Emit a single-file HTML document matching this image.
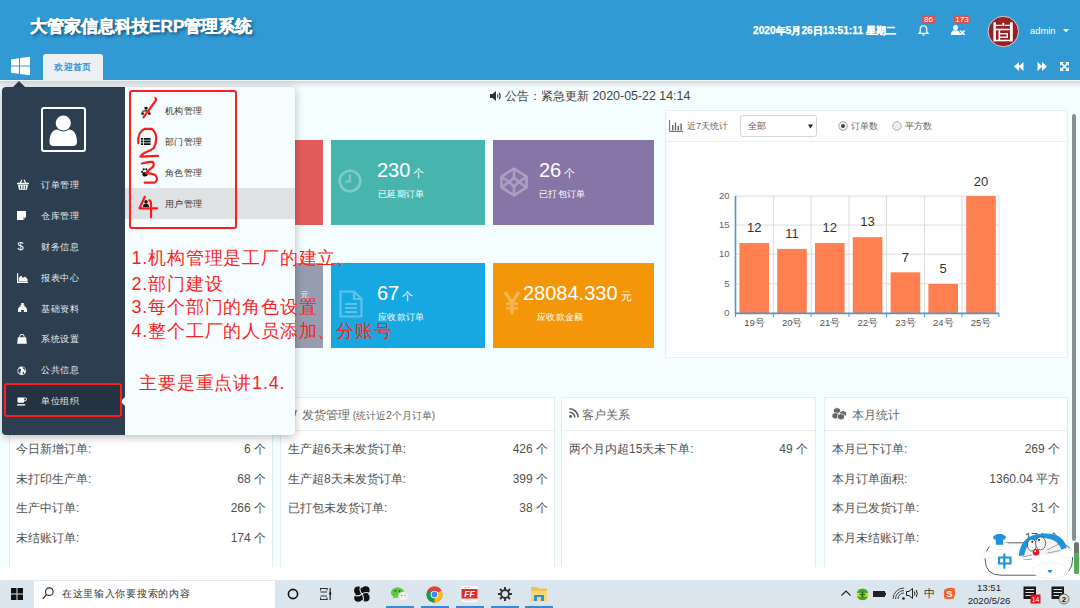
<!DOCTYPE html>
<html><head><meta charset="utf-8">
<style>
*{margin:0;padding:0;box-sizing:border-box}
html,body{width:1080px;height:608px;overflow:hidden;background:#f5fefe;font-family:"Liberation Sans",sans-serif;position:relative}
.a{position:absolute}
.nw{white-space:nowrap}
/* header */
#hdr{left:0;top:0;width:1080px;height:80px;background:#3199d4}
#title{left:30px;top:13.6px;font-size:17.2px;font-weight:bold;color:#fff;text-shadow:2px 2px 3px rgba(0,0,0,.5);-webkit-text-stroke:0.4px #fff;line-height:24px}
#tab{left:43px;top:54px;width:60px;height:26px;background:#eef1f3;border-radius:3px 3px 0 0;color:#3b93d4;font-size:9px;letter-spacing:0.45px;font-weight:bold;text-align:center;line-height:27px}
#band{left:0;top:80px;width:1080px;height:8px;background:linear-gradient(#f4f6f7 0,#f4f6f7 1px,#d3d8da 1.5px,#e4e9eb 4px,#f5fefe 8px)}
.dt{left:753px;top:24px;font-size:10.1px;font-weight:bold;color:#fff;line-height:14px;-webkit-text-stroke:0.25px #fff;letter-spacing:0.05px}
.badge{background:#d9534f;color:#fff;font-size:8px;line-height:9px;height:9px;border-radius:3px;text-align:center}
/* cards */
.card{height:85px;color:#fff}
.num{font-size:20px;line-height:22px;color:#fff}
.num small{font-size:11px;margin-left:3px}
.lbl{font-size:9px;letter-spacing:0.35px;line-height:12px;color:#fff}
/* panels */
.panel{background:#fff;border:1px solid #e6ebeb}
.ph{height:34px;border-bottom:1px solid #e8eef0;font-size:12.5px;color:#555;line-height:34px;padding-left:10px}
.row{font-size:12px;color:#505050;line-height:16px}
/* popup */
#pop{left:2px;top:87px;width:293px;height:348px;border-radius:4px;box-shadow:0 2px 10px rgba(0,0,0,.28);background:#f6fdfe;overflow:hidden}
#popl{left:0;top:0;width:123px;height:348px;background:#2c3e50}
.mi{left:41px;font-size:9px;letter-spacing:0.5px;color:#e9ecef;line-height:12px}
.si{left:164.5px;font-size:9px;letter-spacing:0.5px;color:#333;line-height:12px}
.ann{color:#ff1d1d;font-size:18px;letter-spacing:0.8px;line-height:24px}
/* taskbar */
#tb{left:0;top:580px;width:1080px;height:28px;background:#dbe5ee}
</style></head><body>

<!-- HEADER -->
<div id="hdr" class="a"></div>
<div id="title" class="a nw">大管家信息科技ERP管理系统</div>
<svg class="a" style="left:11px;top:56px" width="20" height="20" viewBox="0 0 20 20"><path d="M0 3.4L8 2.3V9.4H0Z M9 2.1L19 0.7V9.4H9Z M0 10.6H8V17.8L0 16.8Z M9 10.6H19V19.2L9 18Z" fill="#fff"/></svg>
<div id="tab" class="a nw">欢迎首页</div>
<div class="a dt nw">2020年5月26日13:51:11 星期二</div>

<div id="band" class="a"></div>

<!-- header right -->
<svg class="a" style="left:917.5px;top:24.5px" width="11" height="11" viewBox="0 0 12 12"><path d="M6 0.8c-2.2 0-3.6 1.7-3.6 3.8v3L1 9.2h10L9.6 7.6v-3C9.6 2.5 8.2 .8 6 .8z" fill="none" stroke="#fff" stroke-width="1.3"/><path d="M4.6 10.2a1.4 1.4 0 0 0 2.8 0z" fill="#fff"/></svg>
<div class="a badge" style="left:922px;top:15px;width:13px">86</div>
<svg class="a" style="left:951px;top:25px" width="14" height="10" viewBox="0 0 14 10"><circle cx="4.5" cy="2.6" r="2.5" fill="#fff"/><path d="M0 10 C0 6 2 5.2 4.5 5.2 C7 5.2 9 6 9 10Z" fill="#fff"/><path d="M9 5.5 L13.5 10 M13.5 5.5 L9 10" stroke="#fff" stroke-width="1.6"/></svg>
<div class="a badge" style="left:954px;top:15px;width:16px">173</div>
<svg class="a" style="left:987px;top:15px" width="33" height="33" viewBox="0 0 33 33"><circle cx="16.3" cy="16.5" r="15.2" fill="#9a1f22" stroke="#e8dede" stroke-width="0.9"/>
<g fill="#fff"><rect x="6.4" y="7.3" width="2.6" height="19.2"/><rect x="23" y="7.3" width="2.8" height="19.2"/>
<path d="M9 9.8H14.8V11H9Z M17.8 9.8H23V11H17.8Z M15.3 7.8H17.3V11H15.3Z"/>
<rect x="9" y="13.7" width="14" height="1.6"/><rect x="11.5" y="15.3" width="1.6" height="10"/>
<rect x="13" y="18" width="8" height="1.4"/><rect x="13" y="21.5" width="8" height="1.4"/><rect x="19.6" y="18" width="1.4" height="4.9"/>
<rect x="9" y="24.7" width="14" height="1.6"/></g></svg>
<div class="a nw" style="left:1030px;top:24px;font-size:9.4px;color:#fff;line-height:14px">admin</div>
<svg class="a" style="left:1063px;top:29px" width="6" height="4" viewBox="0 0 6 4"><path d="M0 0H6L3 3.5Z" fill="#fff"/></svg>
<svg class="a" style="left:1014px;top:62px" width="10" height="9" viewBox="0 0 10 9"><path d="M0 4.5 L5 0 V9Z M4.5 4.5 L9.5 0 V9Z" fill="#fff"/></svg>
<svg class="a" style="left:1037px;top:62px" width="10" height="9" viewBox="0 0 10 9"><path d="M10 4.5 L5 0 V9Z M5.5 4.5 L0.5 0 V9Z" fill="#fff"/></svg>
<svg class="a" style="left:1060px;top:62px" width="9" height="9" viewBox="0 0 9 9"><path d="M0 0H4L0 4Z M9 0H5L9 4Z M0 9H4L0 5Z M9 9H5L9 5Z" fill="#fff"/><path d="M1.5 1.5L7.5 7.5 M7.5 1.5L1.5 7.5" stroke="#fff" stroke-width="1.5"/></svg>

<!-- notice -->
<svg class="a" style="left:490px;top:91px" width="12" height="10" viewBox="0 0 12 10"><path d="M0 3H2.5L6 0V10L2.5 7H0Z" fill="#333"/><path d="M7.5 3.2Q8.6 5 7.5 6.8 M9.2 1.8Q11.2 5 9.2 8.2" fill="none" stroke="#333" stroke-width="1.1"/></svg>
<div class="a nw" style="left:505px;top:88px;font-size:12.4px;color:#444;line-height:16px">公告：紧急更新 2020-05-22 14:14</div>

<!-- cards -->
<div class="a card" style="left:168px;top:140px;width:155px;background:#e35c5d"></div>
<div class="a card" style="left:331px;top:140px;width:154px;background:#47b5ae"></div>
<div class="a card" style="left:493px;top:140px;width:161px;background:#8775a7"></div>
<div class="a card" style="left:168px;top:263px;width:155px;background:#959daf"></div>
<div class="a card" style="left:331px;top:263px;width:154px;background:#18a8e1"></div>
<div class="a card" style="left:493px;top:263px;width:161px;background:#f39609"></div>
<svg class="a" style="left:338px;top:169px" width="24" height="24" viewBox="0 0 24 24"><g opacity=".3" fill="none" stroke="#fff"><circle cx="12" cy="12" r="10.3" stroke-width="2.6"/><path d="M12 5.5V12.5H7" stroke-width="2.2"/></g></svg>
<div class="a nw num" style="left:377px;top:159px">230<small>个</small></div>
<div class="a nw lbl" style="left:378px;top:188px">已延期订单</div>
<svg class="a" style="left:499px;top:167px" width="30" height="30" viewBox="0 0 30 30"><g opacity=".3" fill="none" stroke="#fff" stroke-width="2.6" stroke-linejoin="round"><path d="M15 1.6L27.6 9.6V20.4L15 28.4L2.4 20.4V9.6Z"/><path d="M15 10.4L19.8 15L15 19.6L10.2 15Z"/><path d="M15 1.6V10.4 M27.6 9.6L19.8 15 M27.6 20.4L19.8 15 M15 28.4V19.6 M2.4 20.4L10.2 15 M2.4 9.6L10.2 15"/></g></svg>
<div class="a nw num" style="left:539px;top:159px">26<small>个</small></div>
<div class="a nw lbl" style="left:539px;top:188px">已打包订单</div>
<svg class="a" style="left:338.8px;top:290px" width="24" height="28" viewBox="0 0 24 28"><g opacity=".3" fill="none" stroke="#fff" stroke-width="2.2" stroke-linejoin="round"><path d="M1.5 1.5H15L22.5 9V26.5H1.5Z M15 1.5V9H22.5"/><path d="M6 14H18 M6 18H18 M6 22H18"/></g></svg>
<div class="a nw" style="left:299.5px;top:290px;font-size:8.5px;line-height:11px;color:rgba(255,255,255,.9)">元</div>
<div class="a nw num" style="left:377px;top:282px">67<small>个</small></div>
<div class="a nw lbl" style="left:378px;top:311px">应收款订单</div>
<svg class="a" style="left:503px;top:291px" width="18" height="24" viewBox="0 0 18 24"><g opacity=".3" fill="none" stroke="#fff" stroke-width="3.2"><path d="M2 1L9 11.5L16 1 M9 11.5V23"/><path d="M3 12.8H15 M3 17.2H15" stroke-width="2.6"/></g></svg>
<div class="a nw num" style="left:523px;top:282px">28084.330<small>元</small></div>
<div class="a nw lbl" style="left:537px;top:311px">应收款金额</div>



<!-- chart panel -->
<div class="a panel" style="left:665px;top:110px;width:403px;height:248px;border-color:#e9eef0"></div>
<div class="a" style="left:666px;top:141px;width:401px;height:1px;background:#e9eef0"></div>
<svg class="a" style="left:669px;top:120px" width="14" height="12" viewBox="0 0 14 12"><path d="M0.6 0V11.4H14" fill="none" stroke="#666" stroke-width="1"/><path d="M3 5H4.4V10.5H3Z M5.8 2.5H7.2V10.5H5.8Z M8.6 6H10V10.5H8.6Z M11.4 3.5H12.8V10.5H11.4Z" fill="#666"/></svg>
<div class="a nw" style="left:687px;top:120px;font-size:9.2px;color:#666;line-height:13px">近7天统计</div>
<div class="a" style="left:740px;top:115px;width:77px;height:22px;border:1px solid #d5d5d5;border-radius:3px;background:#fff"></div>
<div class="a nw" style="left:748px;top:120px;font-size:9.2px;color:#555;line-height:13px">全部</div>
<svg class="a" style="left:808px;top:124px" width="5" height="5" viewBox="0 0 5 5"><path d="M0 0.5H5L2.5 4.5Z" fill="#222"/></svg>
<svg class="a" style="left:838px;top:121px" width="10" height="10" viewBox="0 0 10 10"><circle cx="5" cy="5" r="4.3" fill="#f2f2f2" stroke="#999" stroke-width="0.9"/><circle cx="5" cy="5" r="2" fill="#444"/></svg>
<div class="a nw" style="left:851px;top:120px;font-size:9.2px;color:#666;line-height:13px">订单数</div>
<svg class="a" style="left:892px;top:121px" width="10" height="10" viewBox="0 0 10 10"><circle cx="5" cy="5" r="4.3" fill="#eee" stroke="#aaa" stroke-width="0.9"/></svg>
<div class="a nw" style="left:905px;top:120px;font-size:9.2px;color:#666;line-height:13px">平方数</div>
<svg class="a" style="left:700px;top:160px" width="320" height="180" viewBox="0 0 320 180">
 <g stroke="#dcdcdc" stroke-width="1" fill="none">
  <path d="M35.5 36.1H299 M35.5 65.1H299 M35.5 94.2H299 M35.5 123.8H299"/>
  <path d="M73.4 36V153 M111 36V153 M149 36V153 M186.5 36V153 M224.5 36V153 M262 36V153 M299 36V153"/>
 </g>
 <g fill="#ff7f50">
  <rect x="39.4" y="83" width="29.6" height="70.4"/>
  <rect x="77.2" y="88.9" width="29.6" height="64.5"/>
  <rect x="115" y="83" width="29.6" height="70.4"/>
  <rect x="152.8" y="77.2" width="29.6" height="76.2"/>
  <rect x="190.6" y="112.3" width="29.6" height="41.1"/>
  <rect x="228.4" y="124" width="29.6" height="29.4"/>
  <rect x="266.2" y="36.1" width="29.6" height="117.3"/>
 </g>
 <path d="M35.5 36V154 M35.5 153.4H299" stroke="#5a93c8" stroke-width="1.6" fill="none"/>
 <path d="M35.5 153.4V157 M73.4 153.4V157 M111 153.4V157 M149 153.4V157 M186.5 153.4V157 M224.5 153.4V157 M262 153.4V157 M299 153.4V157" stroke="#5a93c8" stroke-width="1"/>
 <g font-family="Liberation Sans" font-size="9.5" fill="#666" text-anchor="end">
  <text x="29.6" y="38.8">20</text><text x="29.6" y="67.8">15</text><text x="29.6" y="96.9">10</text><text x="29.6" y="126.5">5</text><text x="29.6" y="156.1">0</text>
 </g>
 <g font-family="Liberation Sans" font-size="9.5" fill="#555" text-anchor="middle">
  <text x="54.5" y="166">19号</text><text x="92.2" y="166">20号</text><text x="130" y="166">21号</text><text x="167.7" y="166">22号</text><text x="205.5" y="166">23号</text><text x="243.3" y="166">24号</text><text x="281" y="166">25号</text>
 </g>
 <g font-family="Liberation Sans" font-size="13" fill="#333" text-anchor="middle">
  <text x="54.2" y="72">12</text><text x="92" y="78">11</text><text x="129.8" y="72">12</text><text x="167.6" y="66">13</text><text x="205.4" y="101.5">7</text><text x="243.2" y="113">5</text><text x="281" y="25.8">20</text>
 </g>
</svg>

<!-- bottom panels -->
<div class="a panel" style="left:9px;top:397px;width:264px;height:172px"></div>
<div class="a panel" style="left:280px;top:397px;width:275px;height:172px"></div>
<div class="a panel" style="left:561px;top:397px;width:255px;height:172px"></div>
<div class="a panel" style="left:824px;top:397px;width:244px;height:172px"></div>
<div class="a" style="left:10px;top:430px;width:262px;height:1px;background:#e8eef0"></div>
<div class="a" style="left:281px;top:430px;width:273px;height:1px;background:#e8eef0"></div>
<div class="a" style="left:562px;top:430px;width:253px;height:1px;background:#e8eef0"></div>
<div class="a" style="left:825px;top:430px;width:242px;height:1px;background:#e8eef0"></div>

<div class="a nw" style="left:301.5px;top:407px;font-size:11.6px;color:#666;line-height:16px">发货管理 <span style="font-size:10.2px">(统计近2个月订单)</span></div>
<svg class="a" style="left:288px;top:409px" width="10" height="10" viewBox="0 0 10 10"><path d="M1 8L4 5L2 3L9 1L7 8L5 6Z" fill="#777"/></svg>
<svg class="a" style="left:569px;top:408px" width="10" height="10" viewBox="0 0 10 10"><circle cx="1.6" cy="8.4" r="1.4" fill="#555"/><path d="M0.5 4.2A5.3 5.3 0 0 1 5.8 9.5 M0.5 0.8A8.7 8.7 0 0 1 9.2 9.5" fill="none" stroke="#555" stroke-width="1.5"/></svg>
<div class="a nw" style="left:582px;top:406.5px;font-size:11.6px;color:#666;line-height:16px">客户关系</div>
<svg class="a" style="left:832px;top:407px" width="16" height="13" viewBox="0 0 16 13"><g fill="#666" stroke="#fff" stroke-width="0.7"><path d="M5 0.5L8.5 2V5.5L5 7L1.5 5.5V2Z"/><path d="M3.5 5.5L7 7V10.5L3.5 12L0 10.5V7Z"/><path d="M11 3.5L14.5 5V8.5L11 10L7.5 8.5V5Z"/><path d="M9 6.5L12.5 8V11.5L9 13L5.5 11.5V8Z"/></g></svg>
<div class="a nw" style="left:851.5px;top:406.5px;font-size:11.6px;color:#666;line-height:16px">本月统计</div>

<div class="a row nw" style="left:16px;top:441px">今日新增订单:</div><div class="a row nw" style="left:202px;top:441px;width:64px;text-align:right">6 个</div>
<div class="a row nw" style="left:16px;top:471px">未打印生产单:</div><div class="a row nw" style="left:202px;top:471px;width:64px;text-align:right">68 个</div>
<div class="a row nw" style="left:16px;top:500px">生产中订单:</div><div class="a row nw" style="left:202px;top:500px;width:64px;text-align:right">266 个</div>
<div class="a row nw" style="left:16px;top:529.5px">未结账订单:</div><div class="a row nw" style="left:202px;top:529.5px;width:64px;text-align:right">174 个</div>

<div class="a row nw" style="left:288px;top:441px">生产超6天未发货订单:</div><div class="a row nw" style="left:482px;top:441px;width:66px;text-align:right">426 个</div>
<div class="a row nw" style="left:288px;top:471px">生产超8天未发货订单:</div><div class="a row nw" style="left:482px;top:471px;width:66px;text-align:right">399 个</div>
<div class="a row nw" style="left:288px;top:500px">已打包未发货订单:</div><div class="a row nw" style="left:482px;top:500px;width:66px;text-align:right">38 个</div>

<div class="a row nw" style="left:569px;top:441px">两个月内超15天未下单:</div><div class="a row nw" style="left:742px;top:441px;width:66px;text-align:right">49 个</div>

<div class="a row nw" style="left:832px;top:441px">本月已下订单:</div><div class="a row nw" style="left:962px;top:441px;width:98px;text-align:right">269 个</div>
<div class="a row nw" style="left:832px;top:471px">本月订单面积:</div><div class="a row nw" style="left:962px;top:471px;width:98px;text-align:right">1360.04 平方</div>
<div class="a row nw" style="left:832px;top:500px">本月已发货订单:</div><div class="a row nw" style="left:962px;top:500px;width:98px;text-align:right">31 个</div>
<div class="a row nw" style="left:832px;top:529.5px">本月未结账订单:</div><div class="a row nw" style="left:962px;top:529.5px;width:98px;text-align:right">174 个</div>


<!-- POPUP -->
<svg class="a" style="left:12px;top:80px" width="14" height="8" viewBox="0 0 14 8"><path d="M0 8L7 1L14 8Z" fill="#2c3e50"/></svg>
<div id="pop" class="a">
 <div id="popl" class="a"></div>
 <div class="a" style="left:123px;top:101px;width:170px;height:31px;background:#dfe2e4"></div>
</div>
<!-- avatar -->
<div class="a" style="left:41px;top:107px;width:45px;height:45px;border:2px solid #fff;border-radius:3px"></div>
<svg class="a" style="left:49px;top:115px" width="29" height="32" viewBox="0 0 29 32"><circle cx="14.3" cy="8" r="7.6" fill="#fff"/><path d="M0.5 27C0.5 19 4 14.6 8.5 14.6Q14.3 18.5 20 14.6C24.5 14.6 28 19 28 27Q28 31 24 31H4.5Q0.5 31 0.5 27Z" fill="#fff"/></svg>
<!-- menu -->
<div class="a" style="left:5px;top:384px;width:117px;height:33px;background:#243342"></div>
<svg class="a" style="left:17px;top:179px" width="12" height="11" viewBox="0 0 12 11"><path d="M3 4.5L5 0.8 M9 4.5L7 0.8" stroke="#fff" stroke-width="1.2" fill="none"/><path d="M0 3.8H12V5.2H0Z M1 5.8H11L10 10.8H2Z" fill="#fff"/><path d="M3.6 6.5V10 M6 6.5V10 M8.4 6.5V10" stroke="#2c3e50" stroke-width="0.9"/></svg>
<svg class="a" style="left:17px;top:211px" width="9" height="9" viewBox="0 0 9 9"><path d="M0 0H9V6L6 9H0Z" fill="#fff"/><path d="M6 9V6H9" fill="#aab" /></svg>
<div class="a nw" style="left:17.5px;top:240px;font-size:11px;color:#fff;line-height:13px">$</div>
<svg class="a" style="left:17px;top:273px" width="11" height="10" viewBox="0 0 11 10"><path d="M0.6 0V9.4H11" stroke="#fff" stroke-width="1.2" fill="none"/><path d="M1.8 8.6V5L4 2.5L6 5L8 3.5L10.5 6V8.6Z" fill="#fff"/></svg>
<svg class="a" style="left:18px;top:303px" width="9" height="9" viewBox="0 0 9 9"><path d="M3.3 0H5.7V1.8H6.5V3.8H8V5.3H9V9H5.8V7H3.2V9H0V5.3H1V3.8H2.5V1.8H3.3Z" fill="#fff"/></svg>
<svg class="a" style="left:17px;top:334px" width="10" height="10" viewBox="0 0 11 11"><path d="M3.2 4V2.5Q3.2 0.3 5.5 0.3Q7.8 0.3 7.8 2.5V4" stroke="#fff" stroke-width="1.1" fill="none"/><path d="M1 3.7H10L10.8 10.8H0.2Z" fill="#fff"/></svg>
<svg class="a" style="left:17px;top:366px" width="9.5" height="9.5" viewBox="0 0 11 11"><circle cx="5.5" cy="5.5" r="5" fill="#fff"/><path d="M2.2 3.2Q4 2.6 4.6 4Q5.2 5.6 3.8 6.2Q3.6 7.6 4.4 9.3Q2.2 8.4 1.4 6.4Q1.2 4.4 2.2 3.2Z M6.4 1.4Q6.2 2.8 7.4 3.2Q8.6 3.4 8.4 4.8Q9.4 5 9.9 5.6Q10 3 8 1.6Q7.2 1.2 6.4 1.4Z M6.8 6.6Q8.4 6.6 8.6 7.8Q8 9.2 6.6 9.8Q6.4 8 6.8 6.6Z" fill="#2c3e50"/></svg>
<svg class="a" style="left:17px;top:396.5px" width="10" height="9" viewBox="0 0 11 10"><path d="M0.5 0.5H8V5Q8 6.5 6.5 6.5H2Q0.5 6.5 0.5 5Z" fill="#fff"/><path d="M8 1.2H9.5Q10.5 1.2 10.5 2.6Q10.5 4 9.5 4H8" stroke="#fff" stroke-width="1.1" fill="none"/><path d="M0 8H9V9.5H0Z" fill="#fff"/></svg>
<div class="a mi nw" style="top:179.1px">订单管理</div>
<div class="a mi nw" style="top:210.0px">仓库管理</div>
<div class="a mi nw" style="top:240.8px">财务信息</div>
<div class="a mi nw" style="top:271.7px">报表中心</div>
<div class="a mi nw" style="top:302.5px">基础资料</div>
<div class="a mi nw" style="top:333.4px">系统设置</div>
<div class="a mi nw" style="top:364.3px">公共信息</div>
<div class="a mi nw" style="top:395.1px">单位组织</div>
<svg class="a" style="left:120px;top:396px" width="6" height="11" viewBox="0 0 6 11"><path d="M6 0V11L0.5 5.5Z" fill="#f5fbfd"/></svg>
<!-- submenu -->
<svg class="a" style="left:141px;top:107px" width="10" height="8" viewBox="0 0 10 8"><path d="M3.5 0H6.5V2.2H5.5V3.6H8.6V5.4H9.6V7.8H7.2V5.4H8V4.4H2V5.4H2.8V7.8H0.4V5.4H1.4V3.6H4.5V2.2H3.5Z" fill="#111"/></svg>
<svg class="a" style="left:141px;top:138px" width="10" height="7" viewBox="0 0 10 7"><path d="M0 0H2V1.8H0Z M2.8 0H9.6V1.8H2.8Z M0 2.6H2V4.4H0Z M2.8 2.6H9.6V4.4H2.8Z M0 5.2H2V7H0Z M2.8 5.2H9.6V7H2.8Z" fill="#111"/></svg>
<svg class="a" style="left:141px;top:168px" width="8" height="9" viewBox="0 0 8 9"><ellipse cx="4" cy="6.3" rx="2.6" ry="2.3" fill="#111"/><circle cx="1.1" cy="3.8" r="1.1" fill="#111"/><circle cx="6.9" cy="3.8" r="1.1" fill="#111"/><circle cx="2.7" cy="1.3" r="1.1" fill="#111"/><circle cx="5.3" cy="1.3" r="1.1" fill="#111"/></svg>
<svg class="a" style="left:142.5px;top:200px" width="6" height="7" viewBox="0 0 6 7"><circle cx="3" cy="1.8" r="1.7" fill="#111"/><path d="M0 7Q0 3.4 3 3.4Q6 3.4 6 7Z" fill="#111"/></svg>
<div class="a si nw" style="top:105px">机构管理</div>
<div class="a si nw" style="top:136px">部门管理</div>
<div class="a si nw" style="top:167px">角色管理</div>
<div class="a si nw" style="top:198px">用户管理</div>
<!-- annotations -->
<div class="a" style="left:128.5px;top:90px;width:108px;height:139px;border:2px solid #ff1d1d;border-radius:3px"></div>
<div class="a" style="left:4px;top:383px;width:118px;height:34px;border:2px solid #ff1d1d;border-radius:3px"></div>
<svg class="a" style="left:130px;top:90px" width="50" height="140" viewBox="0 0 50 140">
 <g fill="none" stroke="#ff1a1a" stroke-width="2.2" stroke-linecap="round" stroke-linejoin="round">
  <path d="M25.3 8.1Q26.6 8.8 25.8 10.5L13.5 27.3"/>
  <path d="M8.3 53.2Q7.5 42 14.7 38.8L21.6 38.8Q25.9 42 26.2 47Q26.4 54 23.2 58.6Q18 61.5 14.7 62.8Q11 65 10.4 66.6L28 65.8"/>
  <path d="M12 73.5Q18 71.5 22.7 71.9Q24.5 74 23.2 76.7Q19 80 15.7 83.1Q23 83.5 25.4 85.2Q27.5 88 27 89.5Q26 92.5 24.3 92.7L14.7 92.7"/>
  <path d="M14.8 106.7L9.5 118.3L27.2 118.3 M19.3 110.4Q21 111 21 114L21.1 127.2"/>
 </g>
</svg>
<div class="a ann nw" style="left:131.5px;top:246px">1.机构管理是工厂的建立、</div>
<div class="a ann nw" style="left:131.5px;top:271.7px">2.部门建设</div>
<div class="a ann nw" style="left:131.5px;top:295.4px">3.每个部门的角色设置</div>
<div class="a ann nw" style="left:131.5px;top:319px">4.整个工厂的人员添加、分账号</div>
<div class="a ann nw" style="left:139.3px;top:370.8px">主要是重点讲1.4.</div>

<!-- white strip & scrollbar -->
<div class="a" style="left:0;top:567px;width:1080px;height:13px;background:#fff"></div>
<div class="a" style="left:1071.6px;top:113.5px;width:4.9px;height:427px;border-radius:3px;background:#8a8f92"></div>


<!-- TASKBAR -->
<div id="tb" class="a"></div>
<svg class="a" style="left:11px;top:588px" width="12" height="12" viewBox="0 0 12 12"><path d="M0 0H5.5V5.5H0Z M6.5 0H12V5.5H6.5Z M0 6.5H5.5V12H0Z M6.5 6.5H12V12H6.5Z" fill="#111"/></svg>
<div class="a" style="left:34px;top:580px;width:241px;height:28px;background:#fff;border-top:1px solid #e2e8ee"></div>
<svg class="a" style="left:42px;top:587px" width="12" height="13" viewBox="0 0 12 13"><circle cx="7.3" cy="4.7" r="3.8" fill="none" stroke="#222" stroke-width="1.1"/><path d="M4.6 7.4L0.8 11.8" stroke="#222" stroke-width="1.3"/></svg>
<div class="a nw" style="left:62px;top:587px;font-size:10px;letter-spacing:0.7px;color:#333;line-height:14px">在这里输入你要搜索的内容</div>
<svg class="a" style="left:287px;top:588px" width="12" height="12" viewBox="0 0 12 12"><circle cx="6" cy="6" r="4.6" fill="none" stroke="#111" stroke-width="1.6"/></svg>
<svg class="a" style="left:319px;top:588px" width="14" height="12" viewBox="0 0 14 12"><g stroke="#333" stroke-width="1" fill="none"><path d="M1 0.5H8.5 M1 11.5H8.5 M1.5 0V2.5 M8 0V2.5 M1.5 9.5V12 M8 9.5V12 M1.5 4H8 M1.5 8H8"/></g><path d="M11.2 0V12" stroke="#333" stroke-width="1.3"/><path d="M11.2 4.5V6.5" stroke="#111" stroke-width="2"/></svg>
<svg class="a" style="left:353.5px;top:585.5px" width="16" height="16" viewBox="0 0 16 16"><g fill="#111"><circle cx="4.2" cy="4.6" r="4.1"/><circle cx="11.6" cy="4.2" r="4"/><circle cx="4.2" cy="11.8" r="4"/><circle cx="11.6" cy="11.6" r="4"/><rect x="2" y="2" width="12" height="12"/></g><path d="M6.9 0 Q4.6 4.5 8 8 M8 8 Q11.5 5.3 16 7.5 M8 8 Q4.5 11.2 0 8.9 M8 8 Q10.6 12 8.6 16" fill="none" stroke="#dbe5ee" stroke-width="1.1"/></svg>
<svg class="a" style="left:391px;top:586.5px" width="18" height="14" viewBox="0 0 18 14"><path d="M6.6 0.5C10.2 0.5 13.2 2.8 13.2 5.7C13.2 8.6 10.2 10.9 6.6 10.9C5.8 10.9 5 10.8 4.3 10.6L2 11.8L2.6 9.8C1.1 8.8 0 7.3 0 5.7C0 2.8 3 0.5 6.6 0.5Z" fill="#5ac73c"/><ellipse cx="12.3" cy="9.2" rx="5.2" ry="4.2" fill="#f1f3f1" stroke="#d4dad6" stroke-width="0.4"/><circle cx="4.3" cy="4" r="0.9" fill="#2e6a1e"/><circle cx="8.6" cy="4" r="0.9" fill="#2e6a1e"/><circle cx="10.6" cy="8.4" r="0.6" fill="#777"/><circle cx="14" cy="8.4" r="0.6" fill="#777"/></svg>
<svg class="a" style="left:426px;top:586px" width="17" height="17" viewBox="0 0 17 17"><circle cx="8.5" cy="8.5" r="8" fill="#db4437"/><path d="M8.5 8.5L1.6 4.5A8 8 0 0 0 8.5 16.5Z" fill="#0f9d58"/><path d="M8.5 8.5L15.4 4.5A8 8 0 0 1 8.5 16.5Z" fill="#fbbc05"/><path d="M8.5 4.5H15.4A8 8 0 0 0 1.6 4.5Z" fill="#db4437"/><circle cx="8.5" cy="8.5" r="3.8" fill="#fff"/><circle cx="8.5" cy="8.5" r="2.9" fill="#4285f4"/></svg>
<svg class="a" style="left:461px;top:586px" width="17" height="16" viewBox="0 0 17 16"><rect x="0.5" y="0" width="16" height="16" rx="1" fill="#fff"/><rect x="0.5" y="3" width="16" height="9.5" fill="#e8262a"/><path d="M3 1.5H9 M3 14H12" stroke="#bbb" stroke-width="0.8"/><text x="8.5" y="10.8" font-family="Liberation Sans" font-weight="bold" font-style="italic" font-size="8.5" fill="#fff" text-anchor="middle">FF</text></svg>
<svg class="a" style="left:497.5px;top:587px" width="14" height="14" viewBox="0 0 14 14"><g fill="#333"><path d="M6 0H8V3H6Z M6 11H8V14H6Z M0 6H3V8H0Z M11 6H14V8H11Z"/><path d="M6 0H8V3H6Z M6 11H8V14H6Z M0 6H3V8H0Z M11 6H14V8H11Z" transform="rotate(45 7 7)"/></g><circle cx="7" cy="7" r="3.9" fill="none" stroke="#333" stroke-width="1.8"/></svg>
<svg class="a" style="left:530px;top:585px" width="18" height="18" viewBox="0 0 18 18"><path d="M1 2H7L8.5 3.5H17V16H1Z" fill="#f0c24e"/><path d="M1 6H17V16H1Z" fill="#f8d775"/><path d="M4 10H14V16H11V12H7V16H4Z" fill="#2f8fdd"/></svg>
<div class="a" style="left:386px;top:606px;width:28px;height:2px;background:#3a87d6"></div>
<div class="a" style="left:421px;top:606px;width:28px;height:2px;background:#3a87d6"></div>
<div class="a" style="left:456px;top:606px;width:28px;height:2px;background:#3a87d6"></div>
<div class="a" style="left:491px;top:606px;width:28px;height:2px;background:#3a87d6"></div>
<div class="a" style="left:525px;top:606px;width:28px;height:2px;background:#3a87d6"></div>
<!-- tray -->
<svg class="a" style="left:841px;top:590px" width="10" height="6" viewBox="0 0 10 6"><path d="M0.5 5.5L5 1L9.5 5.5" fill="none" stroke="#222" stroke-width="1.1"/></svg>
<svg class="a" style="left:856px;top:588px" width="13" height="13" viewBox="0 0 13 13"><circle cx="6.5" cy="6.5" r="6" fill="#f6d21c"/><path d="M0.8 5A6 6 0 0 1 12.2 5Z" fill="#37a83b"/><path d="M1 8.5A6 6 0 0 0 12 8.5Z" fill="#37a83b"/><path d="M6.5 3.5V9.5 M3.5 6.5H9.5" stroke="#1d6e22" stroke-width="1.6"/></svg>
<svg class="a" style="left:873px;top:590px" width="13" height="8" viewBox="0 0 13 8"><path d="M0 1H12V7H0Z" fill="#222"/><path d="M12 2.8H13V5.2H12Z" fill="#222"/></svg>
<svg class="a" style="left:892px;top:587px" width="14" height="13" viewBox="0 0 14 13"><path d="M1 12A11 11 0 0 1 12 1 M3.5 12A8.5 8.5 0 0 1 12 3.5 M6 12A6 6 0 0 1 12 6" fill="none" stroke="#444" stroke-width="1"/><circle cx="11.5" cy="11.5" r="1.3" fill="#222"/></svg>
<svg class="a" style="left:906px;top:587px" width="13" height="13" viewBox="0 0 13 13"><path d="M0.5 4.5H3L6.5 1.5V11.5L3 8.5H0.5Z" fill="none" stroke="#222" stroke-width="1"/><path d="M8.3 4.5Q9.5 6.5 8.3 8.5 M10.2 3Q12.3 6.5 10.2 10" fill="none" stroke="#222" stroke-width="1"/></svg>
<div class="a nw" style="left:924px;top:587px;font-size:11px;color:#333;line-height:13px">中</div>
<svg class="a" style="left:943px;top:587px" width="13" height="13" viewBox="0 0 13 13"><path d="M1.5 2.5Q6 0 11.5 1.2Q13 7 10.5 11.8Q5 13 1.2 11.3Q0 6 1.5 2.5Z" fill="#f2642a"/><text x="6.5" y="10.3" font-family="Liberation Sans" font-weight="bold" font-size="9.5" fill="#fff" text-anchor="middle">S</text></svg>
<div class="a nw" style="left:960px;top:581px;width:58px;text-align:center;font-size:9.6px;color:#222;line-height:13px">13:51<br>2020/5/26</div>
<svg class="a" style="left:1023px;top:586px" width="18" height="18" viewBox="0 0 18 18"><path d="M0.5 0.5H13V13H0.5Z" fill="#1a1a1a"/><path d="M2.5 3.5H11 M2.5 6.5H11 M2.5 9.5H8" stroke="#dbe5ee" stroke-width="1.1"/><rect x="7.5" y="8.5" width="10" height="9" fill="#e0121b"/><text x="12.5" y="15.6" font-family="Liberation Sans" font-size="6.8" fill="#fff" text-anchor="middle">14</text></svg>
<svg class="a" style="left:1051px;top:586px" width="19" height="19" viewBox="0 0 19 19"><path d="M0.5 0.5H13V13H0.5Z" fill="#1a1a1a"/><path d="M2.5 3.5H11 M2.5 6.5H11 M2.5 9.5H8" stroke="#dbe5ee" stroke-width="1.1"/><circle cx="13" cy="13" r="5" fill="#d9d9d9" stroke="#555" stroke-width="0.8"/><text x="13" y="16" font-family="Liberation Sans" font-weight="bold" font-size="8" fill="#111" text-anchor="middle">2</text></svg>
<!-- IME widget -->
<svg class="a" style="left:980px;top:528px" width="100" height="52" viewBox="980 528 100 52">
 <path d="M1001 542.8H1056.6Q1072.6 542.8 1072.6 559Q1072.6 575.2 1056.6 575.2H1001Q985.1 575.2 985.1 559Q985.1 542.8 1001 542.8Z" fill="#fff" stroke="#5a5f63" stroke-width="1"/>
 <ellipse cx="999.4" cy="545.5" rx="10" ry="4" fill="#fff" stroke="#e6e9ec" stroke-width="0.6"/>
 <ellipse cx="988.3" cy="555" rx="7" ry="3.5" fill="#fff" stroke="#e6e9ec" stroke-width="0.6"/>
 <path d="M993 536.5L997 534H1002L1006 536.5L1005 539.5H1003.2V544.7H995.8V539.5H994Z" fill="#1f93dc"/>
 <path d="M1004.3 553.5V568.7 M999 557.5H1010.5V563.5H999Z" fill="none" stroke="#1f93dc" stroke-width="2.2"/>
 <path d="M1018.9 556Q1020 534 1044.8 533.6Q1066 534 1067 551Z" fill="#1f93dc"/>
 <path d="M1024 557Q1026 539 1044 538Q1060 539 1062 553Z" fill="#f4f4f4"/>
 <ellipse cx="1031.9" cy="545.1" rx="4.5" ry="6" fill="#f7f7f7" stroke="#333" stroke-width="0.7"/>
 <ellipse cx="1040.6" cy="543.3" rx="5" ry="6.5" fill="#f7f7f7" stroke="#333" stroke-width="0.7"/>
 <circle cx="1032.3" cy="541.8" r="1" fill="#222"/><circle cx="1039" cy="540" r="1" fill="#222"/>
 <path d="M1047 550L1061 543 M1047.5 553L1063 550 M1022 557L1032 555 M1023 560L1032 559" stroke="#666" stroke-width="0.6"/>
 <circle cx="1036" cy="552.3" r="3.3" fill="#e11b22"/><circle cx="1035.2" cy="551.3" r="1" fill="#fff"/>
 <ellipse cx="1025" cy="567" rx="12" ry="7" fill="#fff"/>
 <ellipse cx="1050.4" cy="570.6" rx="18" ry="8" fill="#fff" stroke="#e4e7ea" stroke-width="0.6"/>
 <ellipse cx="1068" cy="553" rx="9" ry="4.5" fill="#fff" stroke="#e6e9ec" stroke-width="0.5"/>
 <path d="M1047.5 570H1052.5Q1051.5 573 1050 573Q1048.5 573 1047.5 570Z" fill="#1f93dc"/>
</svg>
<div class="a" style="left:1074.4px;top:542px;width:4.2px;height:32px;border-radius:3px;background:#6d7471"></div>
<div class="a" style="left:1074.4px;top:553px;width:4.2px;height:21px;border-radius:0 0 3px 3px;background:#4daf55"></div>
</body></html>
